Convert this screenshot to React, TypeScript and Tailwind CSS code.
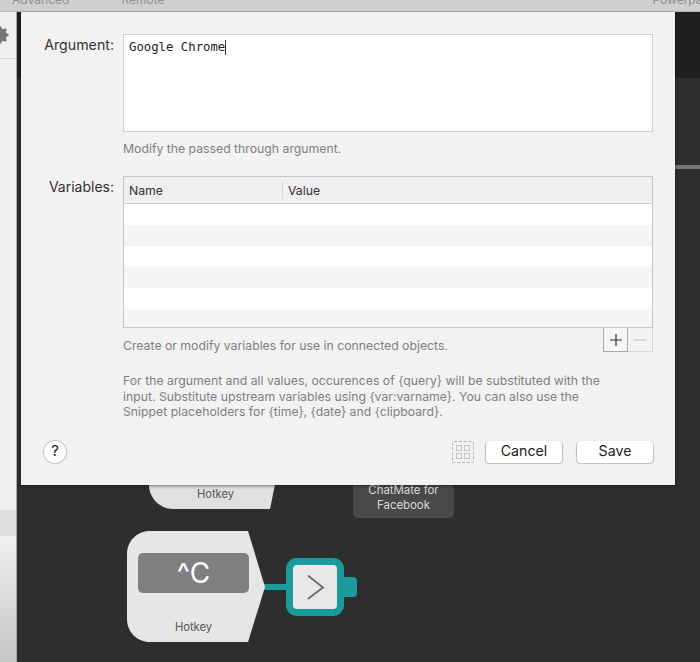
import React from "react";

const rows = ["bg-white", "bg-[#f4f5f5]", "bg-white", "bg-[#f4f5f5]", "bg-white", "bg-[#f4f5f5]"];

function HotkeyNode() {
  return (
    <div className="absolute left-[127px] top-[531px] w-[231px] h-[111px]">
      <svg width="231" height="111" viewBox="0 0 231 111" className="absolute inset-0">
        <rect x="136" y="53" width="26" height="6" fill="#1a9c9c" />
        <path d="M23 0H121L138 56L121 111H23C10 111 0 101 0 88V23C0 10 10 0 23 0Z" fill="#e6e6e6" />
        <rect x="210" y="46" width="20" height="20" rx="4" fill="#1a9c9c" />
        <rect x="159" y="27" width="58" height="58" rx="11" fill="#1a9c9c" />
        <rect x="166" y="34" width="44" height="44" rx="4" fill="#e8e8e8" />
        <path d="M181.500 45L196 56.500L181.500 67.500" fill="none" stroke="#6b6b6b" strokeWidth="1.800" strokeLinecap="round" />
      </svg>
      <div className="absolute left-[11px] top-[22px] w-[111px] h-10 rounded-[5px] bg-[#808080] flex items-center justify-center text-white text-[28px] leading-none">
        ^C
      </div>
      <div className="absolute left-0 top-[88px] w-[133px] text-center text-[11.200px] leading-4 text-[#555]">Hotkey</div>
    </div>
  );
}

export default function App() {
  return (
    <div className="relative w-[700px] h-[662px] overflow-hidden bg-[#2e2e2e] font-['Inter',sans-serif]">
      {/* toolbar behind the sheet */}
      <div className="h-3 bg-[#cfcfcf] border-b border-[#b4b4b4] overflow-hidden flex text-[12px] leading-none text-[#8f8f8f]">
        <span className="ml-3 -mt-1.5">Advanced</span>
        <span className="ml-[52px] -mt-1.5">Remote</span>
        <span className="ml-auto -mt-1.5 -mr-4">Powerpack</span>
      </div>

      <div className="flex h-[650px]">
        {/* left sidebar */}
        <div className="w-[17px] shrink-0 flex flex-col bg-[#f0f0f0] border-r border-[#a9a9a9]">
          <div className="h-[47px] border-b border-[#d8d8d8] overflow-hidden flex items-center">
            <svg width="9" height="18" viewBox="0 0 9 18" className="shrink-0">
              <circle cx="0" cy="9" r="5" fill="none" stroke="#777" strokeWidth="3.500" />
              <path d="M0 9L8.500 9M0 9L6 3M0 9L6 15M0 9L0 0.500M0 9L0 17.500" stroke="#777" strokeWidth="3" />
            </svg>
          </div>
          <div className="h-[451px]" />
          <div className="h-[26px] bg-[#dedede]" />
          <div className="flex-1 bg-gradient-to-b from-[#f0f0f0] to-[#c6c6c6]" />
        </div>

        {/* canvas */}
        <div className="relative flex-1">
          <div className="h-[66px] bg-[#1f1f1f]" />
        </div>
      </div>

      {/* right edge divider */}
      <div className="absolute left-[675px] top-[165px] w-[25px] h-1 bg-[#777]" />

      {/* nodes on the canvas */}
      <div className="absolute left-[149px] top-[470px] w-[129px] h-[39px]">
        <svg width="129" height="39" viewBox="0 0 129 39" className="absolute inset-0">
          <path d="M0 0H129L121 39H24C11 39 0 28 0 15Z" fill="#e0e0e0" />
        </svg>
        <div className="absolute left-0 top-4 w-[133px] text-center text-[11.200px] leading-4 text-[#555]">Hotkey</div>
      </div>
      <div className="absolute left-[353px] top-[470px] w-[101px] h-12 rounded-[5px] bg-[#494949] text-center text-[11.400px] leading-[14.500px] text-[#dcdcdc] pt-[13px]">
        ChatMate for
        <br />
        Facebook
      </div>
      <HotkeyNode />

      {/* sheet */}
      <div className="absolute left-[21px] top-3 w-[654px] h-[473px] bg-[#f2f2f2] shadow-[0_1px_3px_rgba(0,0,0,0.5)] pt-[22px] text-[#333]">
        <div className="grid grid-cols-[93px_530px] gap-x-[9px]">
          <div className="text-right text-[14.200px] leading-5 mt-[1px]">Argument:</div>
          <div>
            <div className="h-[98px] bg-white border border-[#cfcfcf] px-[5px] pt-[5px] font-['DejaVu_Sans_Mono',monospace] text-[12.300px] leading-[15px] text-[#222] flex items-start">
              <span>Google Chrome</span>
              <span className="w-px h-[15px] bg-[#333]" />
            </div>
            <p className="mt-[9px] text-[12.250px] leading-4 text-[#808080]">Modify the passed through argument.</p>
          </div>

          <div className="text-right text-[14px] leading-5 mt-[20px]">Variables:</div>
          <div className="mt-[19px]">
            <div className="h-[152px] border border-[#c8c8c8] bg-white overflow-hidden">
              <div className="h-[27px] bg-[#efefef] border-b border-[#cfcfcf] flex items-center text-[12.250px] text-[#333]">
                <div className="w-[159px] pl-[5px] h-[17px] leading-[17px] border-r border-[#d6d6d6]">Name</div>
                <div className="pl-[5px] leading-[17px]">Value</div>
              </div>
              {rows.map((color, idx) => (
                <div key={idx} className={`h-[21px] ${color}`} />
              ))}
            </div>

            <div className="flex justify-between">
              <p className="mt-[10px] text-[12.250px] leading-4 text-[#808080]">
                Create or modify variables for use in connected objects.
              </p>
              <div className="flex h-6 border-b border-[#d6d6d6] border-r">
                <div className="w-[25px] bg-[#f5f5f5] border-x border-b border-[#a8a8a8] -mb-px flex items-center justify-center">
                  <svg width="14" height="14" viewBox="0 0 14 14">
                    <path d="M7 1V13M1 7H13" stroke="#333" strokeWidth="1.200" />
                  </svg>
                </div>
                <div className="flex-1 w-6 flex items-center justify-center">
                  <svg width="14" height="14" viewBox="0 0 14 14">
                    <path d="M1 7H13" stroke="#cfcfcf" strokeWidth="1.200" />
                  </svg>
                </div>
              </div>
            </div>

            <p className="mt-[19px] text-[12.250px] leading-[15.500px] text-[#808080]">
              For the argument and all values, occurences of {"{query}"} will be substituted with the
              <br />
              input. Substitute upstream variables using {"{var:varname}"}. You can also use the
              <br />
              Snippet placeholders for {"{time}"}, {"{date}"} and {"{clipboard}"}.
            </p>
          </div>
        </div>

        {/* footer */}
        <div className="flex items-center mt-[21px] pl-[23px] pr-[22px]">
          <div className="w-[22px] h-[22px] rounded-full bg-white shadow-[0_0_1px_1px_rgba(0,0,0,0.2)] flex items-center justify-center text-[15px] text-[#222]">
            ?
          </div>
          <div className="ml-auto w-[22px] h-[22px] border border-dashed border-[#b4b4b4] rounded-[2px] grid grid-cols-2 gap-[2px] p-[3px]">
            <div className="border border-[#c4c4c4]" />
            <div className="border border-[#c4c4c4]" />
            <div className="border border-[#c4c4c4]" />
            <div className="border border-[#c4c4c4]" />
          </div>
          <button className="ml-3 w-[76px] h-[22px] bg-white rounded-[4px] shadow-[0_0.500px_1px_0.500px_rgba(0,0,0,0.22)] text-[14.200px] leading-none text-[#222]">
            Cancel
          </button>
          <button className="ml-[15px] w-[76px] h-[22px] bg-white rounded-[4px] shadow-[0_0.500px_1px_0.500px_rgba(0,0,0,0.22)] text-[14.200px] leading-none text-[#222]">
            Save
          </button>
        </div>
      </div>
    </div>
  );
}
